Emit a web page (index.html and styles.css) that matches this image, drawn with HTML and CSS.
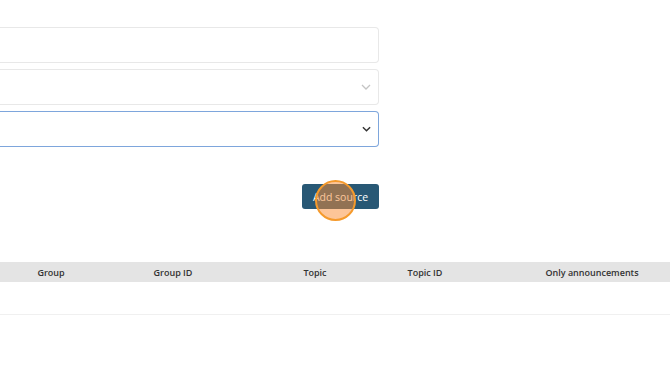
FILE: index.html
```html
<!DOCTYPE html>
<html>
  <head>
    <title>Sources</title>
    <link rel="stylesheet" href="styles.css">
  </head>
  <body>

    <div class="source-form">
      <input class="field" type="text">
      <div class="field select-field muted">
        <svg class="chevron" width="10" height="6" viewBox="0 0 10 6"><path d="M1 1 L5 5 L9 1" fill="none" stroke="#c4c4c4" stroke-width="1.3"/></svg>
      </div>
      <div class="field select-field focused">
        <svg class="chevron" width="9" height="6" viewBox="0 0 10 6"><path d="M1 1 L5 5 L9 1" fill="none" stroke="#333333" stroke-width="1.6"/></svg>
      </div>
      <div class="actions">
        <button class="add-button">Add source</button>
        <span class="click-marker"></span>
      </div>
    </div>

    <div class="sources-table">
      <div class="table-head">
        <div>Group</div>
        <div>Group ID</div>
        <div>Topic</div>
        <div>Topic ID</div>
        <div class="last-col">Only announcements</div>
      </div>
      <div class="table-row"></div>
    </div>

  </body>
</html>
```

FILE: styles.css
```css
body {
    font-family: "Open Sans", sans-serif;
    margin: 0;
    padding: 0;
    background-color: #ffffff;
    color: #333333;
    overflow: hidden;
}

.source-form {
    display: flex;
    flex-direction: column;
    gap: 6px;
    width: 379px;
    padding-top: 27px;
}

.field {
    box-sizing: border-box;
    height: 36px;
    width: 100%;
    border: 1px solid #e8e8e8;
    border-left: none;
    border-radius: 0 4px 4px 0;
    background-color: #ffffff;
    font-size: 13px;
    margin: 0;
}

.select-field {
    display: flex;
    align-items: center;
    justify-content: flex-end;
    padding-right: 7px;
}

.focused {
    border-color: #7ea6dc;
}

.actions {
    position: relative;
    display: flex;
    justify-content: flex-end;
    margin-top: 31px;
}

.add-button {
    height: 25px;
    width: 77px;
    padding: 0;
    border: none;
    border-radius: 3px;
    background-color: #285875;
    color: #ffffff;
    font-family: "Open Sans", sans-serif;
    font-size: 10.5px;
    font-weight: 500;
}

.click-marker {
    position: absolute;
    left: 315px;
    top: -4px;
    width: 37px;
    height: 37px;
    border: 2px solid #f59a2c;
    border-radius: 50%;
    background-color: rgba(252, 140, 50, 0.5);
}

.sources-table {
    margin-top: 53px;
}

.table-head {
    display: grid;
    grid-template-columns: 102px 142px 142px 78px 206px;
    height: 20px;
    align-items: center;
    background-color: #e4e4e4;
    font-size: 9px;
    font-weight: 600;
    text-align: center;
}

.last-col {
    padding-left: 50px;
}

.table-row {
    height: 32px;
    border-bottom: 1px solid #f0f0f0;
}
```
